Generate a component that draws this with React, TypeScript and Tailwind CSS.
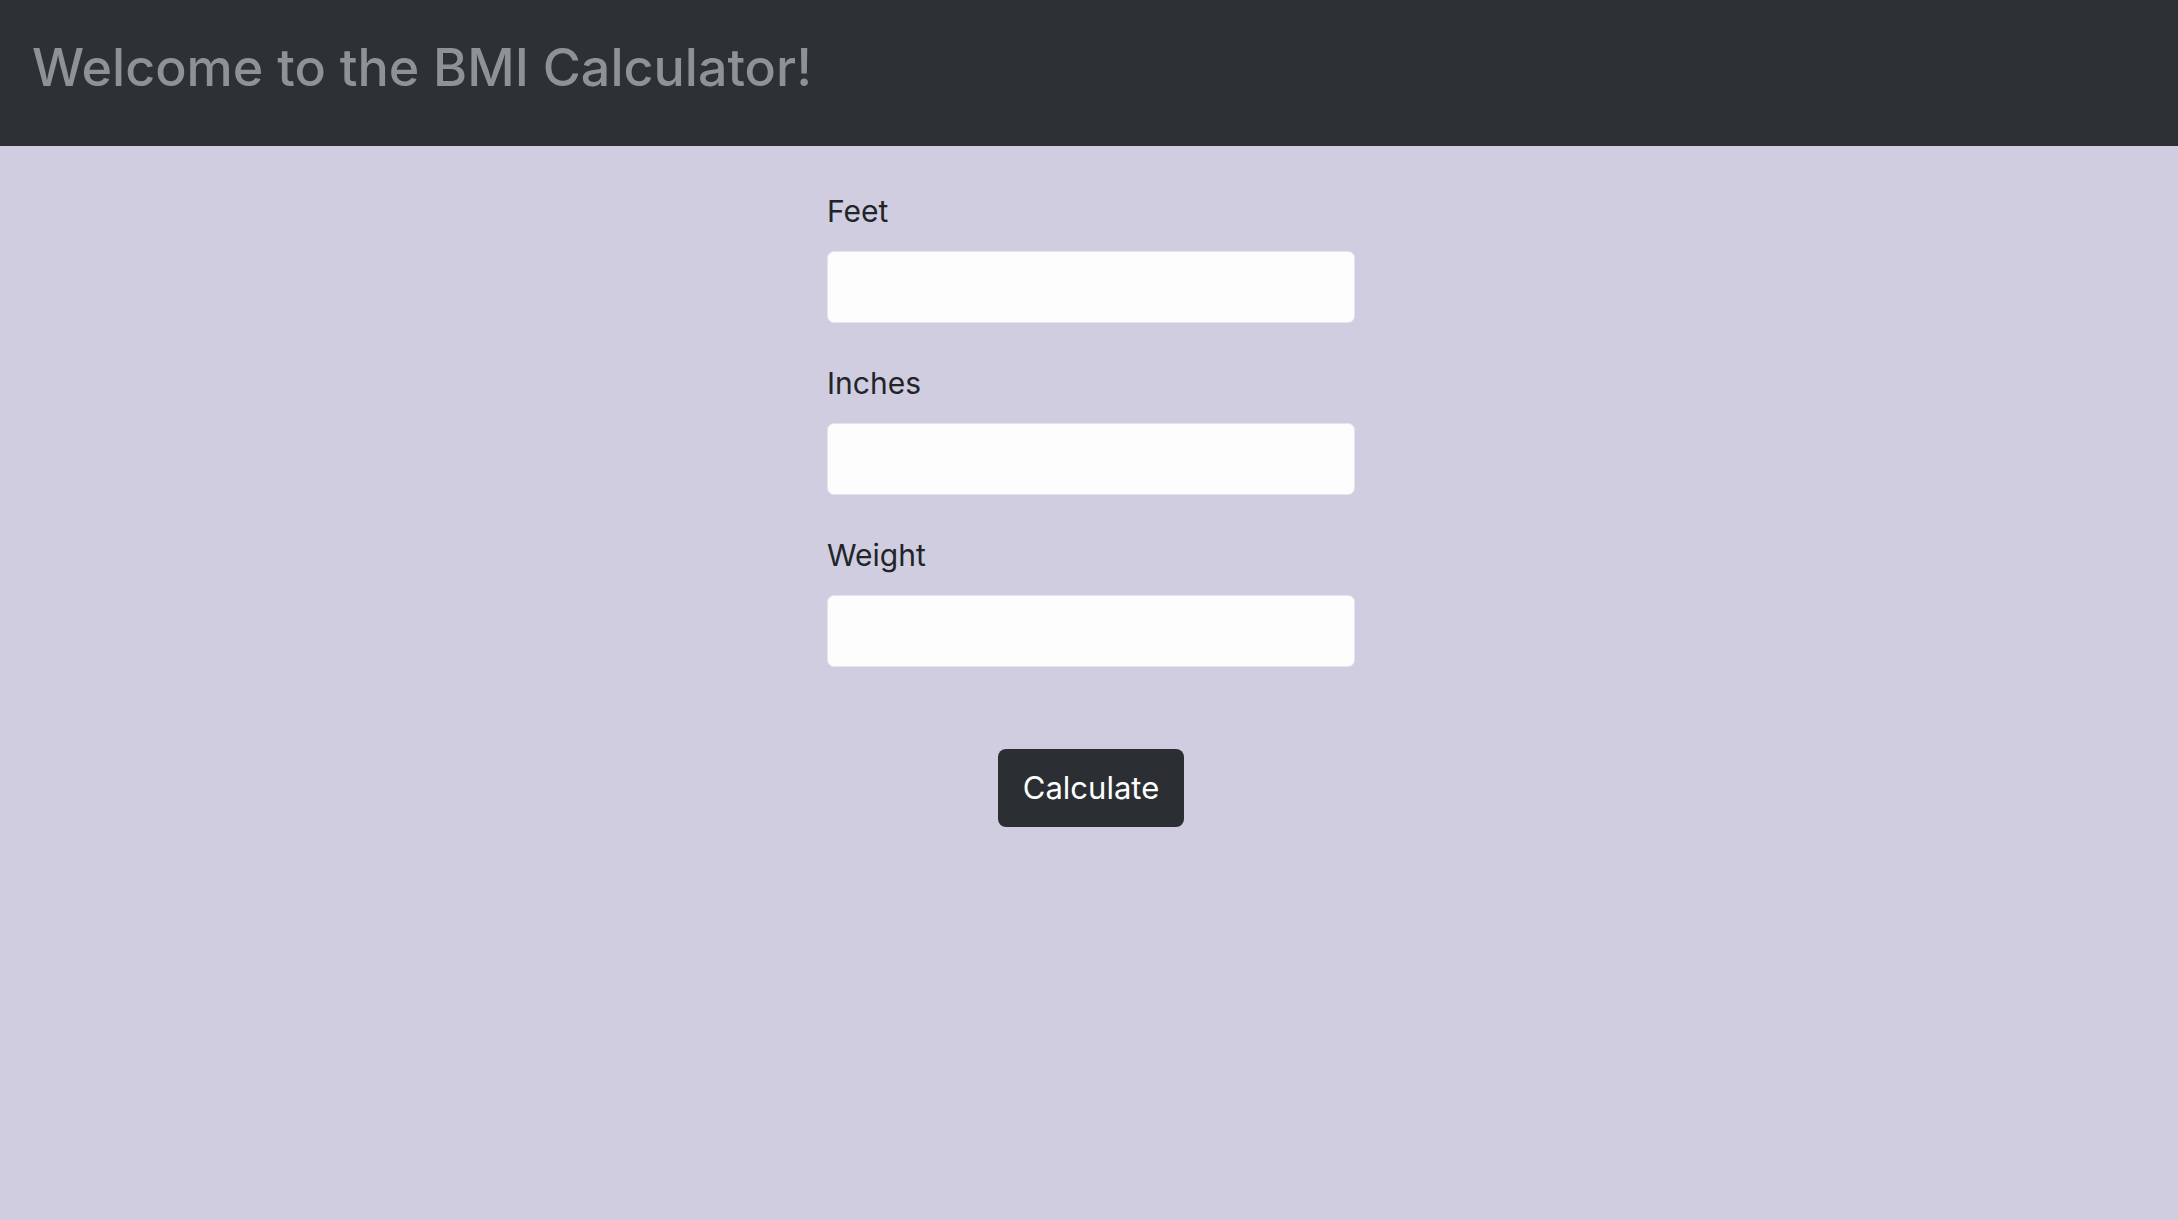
import React from "react";

function Field({ label }: { label: string }) {
  return (
    <div className="mb-[37px] flex flex-col">
      <label className="mb-[17px] text-[30px] leading-[46px] text-[#212529]">{label}</label>
      <input
        type="text"
        className="h-[72px] w-full rounded-[7px] border border-[#e6e5ee] bg-[#fdfdfe] px-4 text-[30px] outline-none"
      />
    </div>
  );
}

export default function App() {
  return (
    <div
      className="min-h-[1220px] w-full bg-[#cfcddf]"
      style={{ fontFamily: 'Inter, "Liberation Sans", Arial, sans-serif' }}
    >
      <header className="flex h-[146px] items-start bg-[#2c3135] pl-[32px] pt-[34px]">
        <h1 className="text-[52px] font-medium leading-[67px] text-[#8e9295]">
          Welcome to the BMI Calculator!
        </h1>
      </header>
      <main className="flex flex-col items-center pl-[4px] pt-[42px]">
        <div className="flex w-[528px] flex-col">
          <Field label="Feet" />
          <Field label="Inches" />
          <Field label="Weight" />
        </div>
        <button className="mt-[45px] h-[78px] w-[186px] rounded-[8px] bg-[#2b2f33] text-[31px] text-white">
          Calculate
        </button>
      </main>
    </div>
  );
}
